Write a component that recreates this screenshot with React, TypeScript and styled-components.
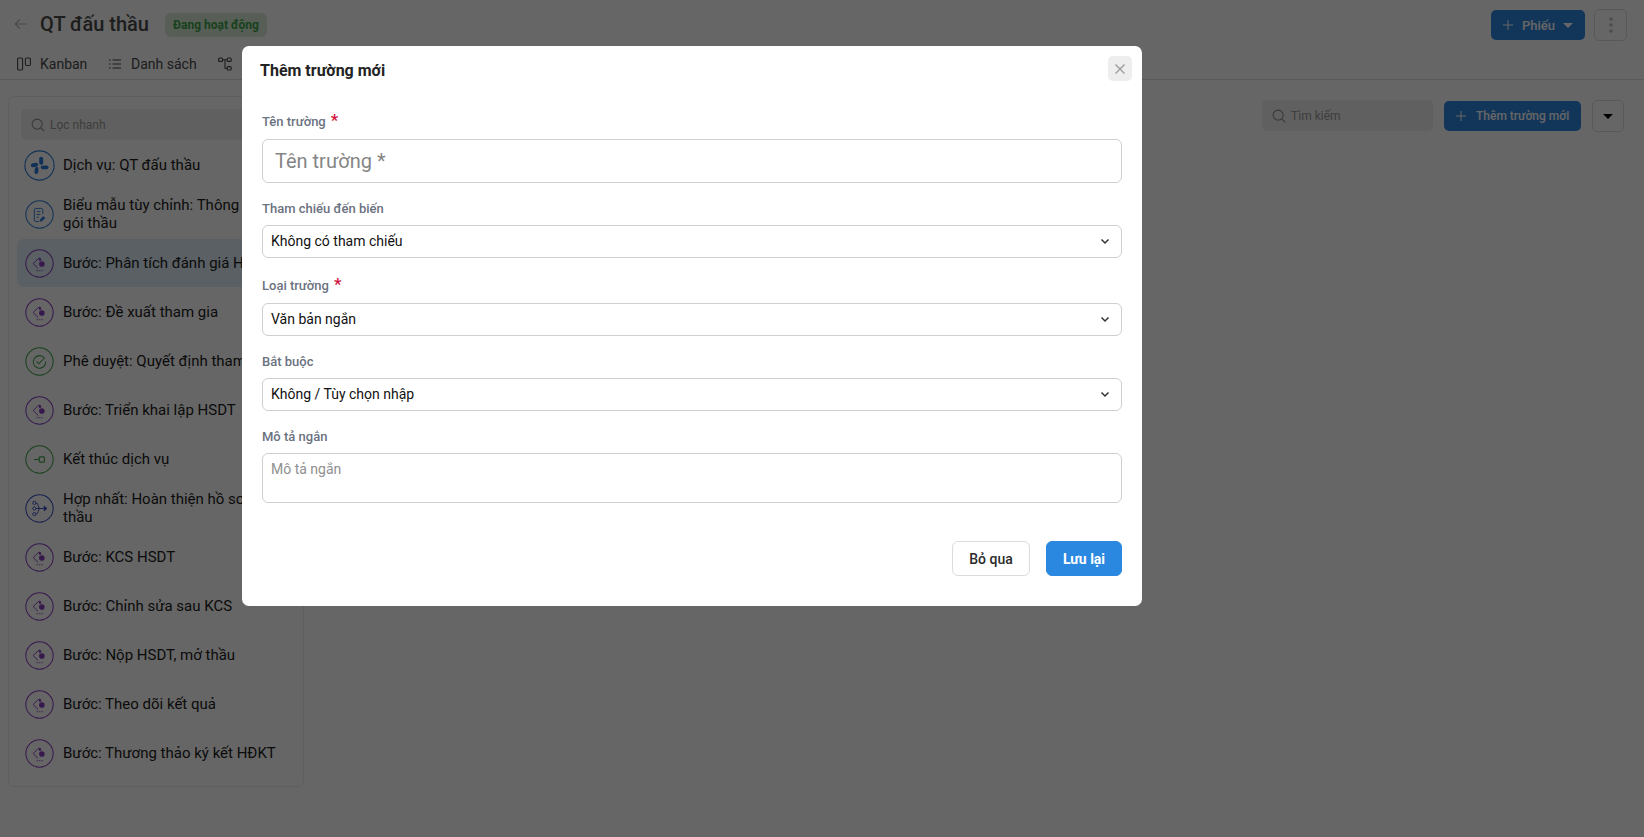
import React from "react";
import styled, { createGlobalStyle } from "styled-components";

const Global = createGlobalStyle`
  html, body { margin: 0; padding: 0; height: 100%; overflow: hidden; background: #fff; }
  * { box-sizing: border-box; }
  body { font-family: Roboto, "Noto Sans", "Liberation Sans", sans-serif; color: #2b2b2b; }
`;

const Page = styled.div`
  width: 1644px;
  height: 837px;
  display: flex;
  flex-direction: column;
`;
const Header = styled.header`
  height: 80px;
  border-bottom: 1px solid #e0e0e0;
  display: flex;
  flex-direction: column;
  flex: none;
`;
const TopBar = styled.div`
  height: 48px;
  padding: 9px 17px 0 14px;
  display: flex;
  align-items: flex-start;
`;
const BackBtn = styled.span`
  width: 26px;
  height: 30px;
  display: flex;
  align-items: center;
  color: #b5b5b5;
`;
const Title = styled.h1`
  margin: 0;
  font-size: 20px;
  line-height: 30px;
  font-weight: 500;
  color: #4a4a4a;
`;
const Badge = styled.span`
  margin: 4px 0 0 16px;
  height: 24px;
  width: 102px;
  border-radius: 6px;
  background: #d6ecd8;
  color: #3fa34a;
  font-size: 12px;
  font-weight: 700;
  display: flex;
  align-items: center;
  justify-content: center;
`;
const Spacer = styled.div`
  flex: 1;
`;
const PrimaryBtn = styled.button<{ $w: number; $h: number }>`
  width: ${(p) => p.$w}px;
  height: ${(p) => p.$h}px;
  border: 0;
  border-radius: 5px;
  background: #2f88e0;
  color: #fff;
  font: 500 12px Roboto, sans-serif;
  white-space: nowrap;
  display: flex;
  align-items: center;
  padding: 0 0 0 12px;
  gap: 10px;
`;
const PhieuBtn = styled(PrimaryBtn)`
  margin-top: 1px;
  font-size: 13px;
  gap: 9px;
  & > span { margin-left: -1px; }
`;
const Caret = styled.span<{ $dark?: boolean }>`
  width: 0;
  height: 0;
  border-left: 5px solid transparent;
  border-right: 5px solid transparent;
  border-top: 5px solid ${(p) => (p.$dark ? "#000" : "#fff")};
`;
const IconBtn = styled.button<{ $ml: number; $w: number }>`
  margin-left: ${(p) => p.$ml}px;
  width: ${(p) => p.$w}px;
  height: 32px;
  border: 1px solid #dedede;
  border-radius: 5px;
  background: #fff;
  display: flex;
  align-items: center;
  justify-content: center;
  padding: 0;
  color: #c0c0c0;
`;
const Tabs = styled.nav`
  padding: 0 0 0 17px;
  height: 31px;
  display: flex;
  align-items: flex-start;
`;
const Tab = styled.span<{ $gap: number; $w: number }>`
  display: flex;
  align-items: center;
  gap: ${(p) => p.$gap}px;
  height: 32px;
  width: ${(p) => p.$w}px;
  font-size: 14px;
  color: #4a4a4a;
  flex: none;
`;
const Body = styled.main`
  flex: 1;
  display: flex;
  padding: 16px 20px 0 8px;
  align-items: flex-start;
`;
const Panel = styled.aside`
  width: 296px;
  height: 691px;
  border: 1px solid #ececec;
  border-radius: 7px;
  padding: 12px 8px 0;
  flex: none;
`;
const SearchBox = styled.div<{ $w: string; $ml: number }>`
  width: ${(p) => p.$w};
  margin-left: ${(p) => p.$ml}px;
  height: 31px;
  border-radius: 5px;
  background: #f1f1f1;
  display: flex;
  align-items: center;
  gap: 5px;
  padding-left: 10px;
  font-size: 12px;
  color: #9a9a9a;
  flex: none;
`;
const Items = styled.ul`
  list-style: none;
  margin: 1px 0 0;
  padding: 0;
  display: flex;
  flex-direction: column;
  gap: 1px;
`;
const Item = styled.li<{ $active?: boolean }>`
  height: 48px;
  padding: 0 15px 0 7px;
  border-radius: 7px;
  background: ${(p) => (p.$active ? "#e0eff8" : "transparent")};
  display: flex;
  align-items: center;
  gap: 8px;
  font-size: 15px;
  line-height: 18px;
  color: #1c1c1c;
`;
const Circle = styled.span<{ $c: string }>`
  width: 31px;
  height: 31px;
  flex: none;
  display: flex;
  align-items: center;
  justify-content: center;
  color: ${(p) => p.$c};
  & > svg { display: block; }
`;
const ToolRow = styled.section`
  flex: 1;
  padding-top: 4px;
  display: flex;
  justify-content: flex-end;
  align-items: flex-start;
  height: 40px;
`;
const TFieldBtn = styled(PrimaryBtn)`
  margin-left: 11px;
  margin-top: 1px;
`;

const Overlay = styled.div`
  position: fixed;
  inset: 0;
  background: rgba(0, 0, 0, 0.6);
  display: flex;
  justify-content: flex-start;
  align-items: flex-start;
  padding: 46px 0 0 242px;
`;
const Modal = styled.div`
  width: 900px;
  height: 560px;
  background: #fff;
  border-radius: 7px;
  padding: 10px 20px 0 18px;
  display: flex;
  flex-direction: column;
`;
const ModalHead = styled.div`
  display: flex;
  justify-content: space-between;
  align-items: flex-start;
  height: 56px;
  margin-right: -10px;
`;
const ModalTitle = styled.h2`
  margin: 5px 0 0;
  font-size: 16px;
  line-height: 20px;
  font-weight: 700;
  color: #222;
`;
const CloseBtn = styled.button`
  width: 24px;
  height: 25px;
  border: 0;
  border-radius: 5px;
  background: #eeeeee;
  color: #9a9a9a;
  display: flex;
  align-items: center;
  justify-content: center;
  padding: 0;
`;
const Form = styled.form`
  margin-left: 2px;
  display: flex;
  flex-direction: column;
`;
const Field = styled.div<{ $mb: number }>`
  display: flex;
  flex-direction: column;
  margin-bottom: ${(p) => p.$mb}px;
`;
const Label = styled.label<{ $mb: number }>`
  display: flex;
  height: 18px;
  align-items: center;
  gap: 5px;
  margin-bottom: ${(p) => p.$mb}px;
  font-size: 13px;
  font-weight: 500;
  color: #6b7280;
`;
const Star = styled.span`
  color: #d0103a;
  font-size: 17px;
  line-height: 14px;
  font-weight: 500;
  margin-top: -2px;
`;
const BigInput = styled.input`
  height: 44px;
  width: 100%;
  border: 1px solid #cfcfcf;
  border-radius: 6px;
  padding: 0 12px;
  font: 400 20px Roboto, sans-serif;
  outline: none;
  &::placeholder { color: #858585; opacity: 1; }
`;
const Select = styled.div`
  height: 33px;
  border: 1px solid #cfcfcf;
  border-radius: 6px;
  padding: 0 11px 2px 8px;
  display: flex;
  align-items: center;
  justify-content: space-between;
  font-size: 14px;
  color: #111;
  & > svg { margin-top: 2px; }
`;
const Area = styled.textarea`
  height: 50px;
  width: 100%;
  border: 1px solid #cfcfcf;
  border-radius: 6px;
  padding: 6px 8px;
  font: 400 14px/18px Roboto, sans-serif;
  resize: none;
  outline: none;
  display: block;
  &::placeholder { color: #8f8f8f; opacity: 1; }
`;
const Footer = styled.div`
  display: flex;
  justify-content: flex-end;
  gap: 16px;
  margin-top: 38px;
`;
const FootBtn = styled.button<{ $primary?: boolean }>`
  height: 35px;
  width: ${(p) => (p.$primary ? 76 : 78)}px;
  border-radius: 6px;
  border: 1px solid ${(p) => (p.$primary ? "#2b88e0" : "#dcdcdc")};
  background: ${(p) => (p.$primary ? "#2b88e0" : "#fff")};
  color: ${(p) => (p.$primary ? "#fff" : "#2b2b2b")};
  font: ${(p) => (p.$primary ? 700 : 500)} 14px Roboto, sans-serif;
  padding: 0;
`;

const Plus = () => (
  <svg width="10" height="10" viewBox="0 0 10 10" fill="none" stroke="currentColor" strokeWidth="1">
    <path d="M5 0v10M0 5h10" />
  </svg>
);
const Glass = ({ c = "#8a8a8a" }: { c?: string }) => (
  <svg width="14" height="14" viewBox="0 0 15 15" fill="none" stroke={c} strokeWidth="1.1">
    <circle cx="6.6" cy="6.6" r="5.4" />
    <path d="M10.5 10.5l3.6 3.6" />
  </svg>
);
const Chevron = () => (
  <svg width="10" height="7" viewBox="0 0 10 7" fill="none" stroke="#333" strokeWidth="1.5">
    <path d="M1.5 1.5L5 5l3.5-3.5" />
  </svg>
);

type Kind = "service" | "form" | "step" | "check" | "end" | "merge";
const colors: Record<Kind, string> = {
  service: "#2e7bd8",
  form: "#2e7bd8",
  step: "#8a3fc0",
  check: "#3fa34a",
  end: "#3fa34a",
  merge: "#3a4fc4",
};
const Glyph = ({ kind }: { kind: Kind }) => {
  switch (kind) {
    case "service":
      return (
        <g fill="currentColor" stroke="none">
          <rect x="6.8" y="13" width="7.4" height="4" rx="2" transform="rotate(-6 10.5 15)" />
          <rect x="15.2" y="6.8" width="4" height="8" rx="2" />
          <rect x="16.8" y="15.4" width="7.6" height="3.8" rx="1.9" />
          <rect x="10.6" y="17" width="3.8" height="7" rx="1.9" transform="rotate(6 12.5 20.5)" />
        </g>
      );
    case "form":
      return (
        <g fill="none" stroke="currentColor" strokeWidth="1">
          <path d="M19 15V10.5A1.5 1.5 0 0 0 17.5 9h-6A1.5 1.5 0 0 0 10 10.5v11a1.5 1.5 0 0 0 1.5 1.5H15" />
          <path d="M12.5 12.5h4M12.5 15.5h4M12.5 18.5h2" />
          <path d="M16.2 22.6l.4-2 3-3 1.6 1.6-3 3z" fill="currentColor" />
        </g>
      );
    case "step":
      return (
        <g>
          <path d="M14.8 9.8L8.7 15.5l5.3 5.3" fill="none" stroke="currentColor" strokeWidth="1" />
          <path d="M14.6 9.4l2.2.2.7 2.6-2.4.7z" fill="currentColor" />
          <circle cx="18" cy="16" r="3" fill="currentColor" />
          <path d="M12.4 23.2h7.6" fill="none" stroke="currentColor" strokeWidth="0.9" strokeDasharray="1.5 1" />
        </g>
      );
    case "check":
      return (
        <g fill="none" stroke="currentColor" strokeWidth="1.1">
          <path d="M20.8 11.8A6.7 6.7 0 1 0 22.2 15.5" />
          <path d="M12.2 15.3l2.6 2.6 6.2-6.4" />
        </g>
      );
    case "end":
      return (
        <g fill="none" stroke="currentColor" strokeWidth="1.2">
          <path d="M9.5 15.5h5.5" />
          <rect x="15.2" y="12.7" width="5.6" height="5.6" rx="1" />
        </g>
      );
    default:
      return (
        <g fill="none" stroke="currentColor" strokeWidth="1">
          <circle cx="10" cy="9.5" r="1.7" />
          <circle cx="10" cy="15.5" r="1.7" />
          <circle cx="10" cy="21.5" r="1.7" />
          <path d="M11.7 9.5c3.4 0 1.8 6 4.4 6M11.7 21.5c3.4 0 1.8-6 4.4-6M11.7 15.5h10" />
          <path d="M20.5 13l3 2.5-3 2.5z" fill="currentColor" />
        </g>
      );
  }
};
const NodeIcon = ({ kind }: { kind: Kind }) => (
  <svg width={kind === "service" ? 31 : 29} height={kind === "service" ? 31 : 29} viewBox="0 0 31 31">
    <circle cx="15.5" cy="15.5" r="14.6" fill="none" stroke="currentColor" strokeWidth="1.1" />
    <Glyph kind={kind} />
  </svg>
);

const rows: { k: Kind; t: string; active?: boolean }[] = [
  { k: "service", t: "Dịch vụ: QT đấu thầu" },
  { k: "form", t: "Biểu mẫu tùy chỉnh: Thông tin gói thầu" },
  { k: "step", t: "Bước: Phân tích đánh giá HSMT", active: true },
  { k: "step", t: "Bước: Đề xuất tham gia" },
  { k: "check", t: "Phê duyệt: Quyết định tham" },
  { k: "step", t: "Bước: Triển khai lập HSDT" },
  { k: "end", t: "Kết thúc dịch vụ" },
  { k: "merge", t: "Hợp nhất: Hoàn thiện hồ sơ dự thầu" },
  { k: "step", t: "Bước: KCS HSDT" },
  { k: "step", t: "Bước: Chỉnh sửa sau KCS" },
  { k: "step", t: "Bước: Nộp HSDT, mở thầu" },
  { k: "step", t: "Bước: Theo dõi kết quả" },
  { k: "step", t: "Bước: Thương thảo ký kết HĐKT" },
];

export default function App() {
  return (
    <>
      <Global />
      <Page>
        <Header>
          <TopBar>
            <BackBtn>
              <svg width="14" height="12" viewBox="0 0 14 12" fill="none" stroke="currentColor" strokeWidth="1.2">
                <path d="M13 6H1.5M6 1.2L1.2 6 6 10.8" />
              </svg>
            </BackBtn>
            <Title>QT đấu thầu</Title>
            <Badge>Đang hoạt động</Badge>
            <Spacer />
            <PhieuBtn $w={94} $h={30}>
              <Plus />
              Phiếu
              <Caret />
            </PhieuBtn>
            <IconBtn $ml={9} $w={33}>
              <svg width="4" height="16" viewBox="0 0 4 16" fill="currentColor">
                <circle cx="2" cy="2" r="1.8" />
                <circle cx="2" cy="8" r="1.8" />
                <circle cx="2" cy="14" r="1.8" />
              </svg>
            </IconBtn>
          </TopBar>
          <Tabs>
            <Tab $gap={9} $w={92}>
              <svg width="14" height="14" viewBox="0 0 14 14" fill="none" stroke="currentColor" strokeWidth="1.1">
                <rect x="0.6" y="1" width="5" height="12" rx="1.2" />
                <rect x="8.4" y="1" width="5" height="7.5" rx="1.2" />
              </svg>
              Kanban
            </Tab>
            <Tab $gap={10} $w={109}>
              <svg width="12" height="12" viewBox="0 0 12 12" fill="none" stroke="currentColor" strokeWidth="1.2">
                <path d="M3.5 2h8.5M3.5 6h8.5M3.5 10h8.5M0 2h1.6M0 6h1.6M0 10h1.6" />
              </svg>
              Danh sách
            </Tab>
            <Tab $gap={10} $w={80}>
              <svg width="14" height="14" viewBox="0 0 14 14" fill="none" stroke="currentColor" strokeWidth="1.1">
                <rect x="0.6" y="1" width="4" height="3.4" rx="1" />
                <rect x="9.2" y="1" width="4" height="3.4" rx="1" />
                <rect x="9.2" y="9.6" width="4" height="3.4" rx="1" />
                <path d="M4.6 2.7h4.6M7 2.7v8.6h2.2" />
              </svg>
            </Tab>
          </Tabs>
        </Header>
        <Body>
          <Panel>
            <SearchBox $w="calc(100% - 4px)" $ml={4}>
              <Glass />
              Lọc nhanh
            </SearchBox>
            <Items>
              {rows.map((r) => (
                <Item key={r.t} $active={r.active}>
                  <Circle $c={colors[r.k]}>
                    <NodeIcon kind={r.k} />
                  </Circle>
                  {r.t}
                </Item>
              ))}
            </Items>
          </Panel>
          <ToolRow>
            <SearchBox $w="171px" $ml={0}>
              <Glass />
              Tìm kiếm
            </SearchBox>
            <TFieldBtn $w={137} $h={30}>
              <Plus />
              Thêm trường mới
            </TFieldBtn>
            <IconBtn $ml={11} $w={32}>
              <Caret $dark />
            </IconBtn>
          </ToolRow>
        </Body>
      </Page>
      <Overlay>
        <Modal>
          <ModalHead>
            <ModalTitle>Thêm trường mới</ModalTitle>
            <CloseBtn type="button" aria-label="close">
              <svg width="12" height="12" viewBox="0 0 12 12" fill="none" stroke="currentColor" strokeWidth="1.3">
                <path d="M1.5 1.5l9 9M10.5 1.5l-9 9" />
              </svg>
            </CloseBtn>
          </ModalHead>
          <Form>
            <Field $mb={16}>
              <Label $mb={9}>
                Tên trường <Star>*</Star>
              </Label>
              <BigInput placeholder="Tên trường *" readOnly />
            </Field>
            <Field $mb={18}>
              <Label $mb={8}>Tham chiếu đến biến</Label>
              <Select>
                Không có tham chiếu
                <Chevron />
              </Select>
            </Field>
            <Field $mb={16}>
              <Label $mb={9}>
                Loại trường <Star>*</Star>
              </Label>
              <Select>
                Văn bản ngắn
                <Chevron />
              </Select>
            </Field>
            <Field $mb={16}>
              <Label $mb={8}>Bắt buộc</Label>
              <Select>
                Không / Tùy chọn nhập
                <Chevron />
              </Select>
            </Field>
            <Field $mb={0}>
              <Label $mb={8}>Mô tả ngắn</Label>
              <Area placeholder="Mô tả ngắn" readOnly />
            </Field>
            <Footer>
              <FootBtn type="button">Bỏ qua</FootBtn>
              <FootBtn type="button" $primary>
                Lưu lại
              </FootBtn>
            </Footer>
          </Form>
        </Modal>
      </Overlay>
    </>
  );
}
